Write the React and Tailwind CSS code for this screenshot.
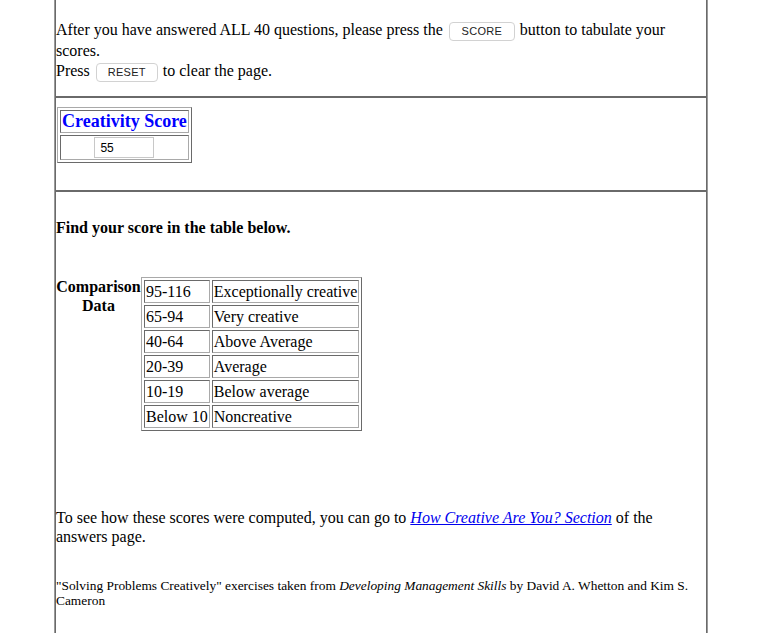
import { useState } from 'react';

// Data tabel perbandingan skor
const ranges = [
  ['95-116', 'Exceptionally creative'],
  ['65-94', 'Very creative'],
  ['40-64', 'Above Average'],
  ['20-39', 'Average'],
  ['10-19', 'Below average'],
  ['Below 10', 'Noncreative'],
];

const tableBorder = 'border border-t-[#a9a9a9] border-l-[#a9a9a9] border-b-[#6a6a6a] border-r-[#6a6a6a]';
const cellBorder = 'border border-t-[#6a6a6a] border-l-[#6a6a6a] border-b-[#a9a9a9] border-r-[#a9a9a9]';

function FormButton({ label, width }) {
  return (
    <button
      className={`inline-block align-middle ml-[2px] mr-[1px] h-[19px] ${width} bg-white border border-[#d2d2d2] rounded-[4px] text-[11px] leading-[17px] font-['Liberation_Sans',sans-serif] text-[#222] tracking-[0.3px]`}
    >
      {label}
    </button>
  );
}

export default function App() {
  const [score, setScore] = useState('55');

  return (
    <div className="min-h-[633px] bg-white font-['Liberation_Serif',serif] text-black text-[16px]">
      <div className="ml-[54px] w-[654px] border-x border-[#9a9a9a]">
        {/* Bagian 1: petunjuk */}
        <div className="border-x border-b border-[#6a6a6a] h-[97px] pt-[20px] leading-[20px]">
          <div>
            After you have answered ALL 40 questions, please press the <FormButton label="SCORE" width="w-[66px]" /> button to tabulate your scores.
          </div>
          <div>
            Press <FormButton label="RESET" width="w-[62px]" /> to clear the page.
          </div>
        </div>

        {/* Bagian 2: skor */}
        <div className="border border-[#6a6a6a] h-[94px] pt-[9px] pl-[1px]">
          <table className={`border-separate border-spacing-[2px] ${tableBorder}`}>
            <tbody>
              <tr>
                <td className={`${cellBorder} p-[1px] text-[18px] leading-[19px] font-bold text-[#0000ff] text-center`}>
                  Creativity Score
                </td>
              </tr>
              <tr>
                <td className={`${cellBorder} p-[1px]`}>
                  <input
                    value={score}
                    onChange={(e) => setScore(e.target.value)}
                    className="block mx-auto w-[60px] h-[21px] border border-[#c8c8c8] px-[5px] text-[12px] font-['Liberation_Sans',sans-serif] text-black outline-none"
                  />
                </td>
              </tr>
            </tbody>
          </table>
        </div>

        {/* Bagian 3: tabel perbandingan */}
        <div className="border-x border-t border-[#6a6a6a] h-[460px] pt-[27px]">
          <div className="font-bold leading-[18px]">Find your score in the table below.</div>

          <div className="flex items-start mt-[40px]">
            <div className="w-[85px] text-center font-bold leading-[19px]">
              Comparison
              <br />
              Data
            </div>
            <table className={`border-separate border-spacing-[2px] ${tableBorder}`}>
              <tbody>
                {ranges.map(([range, label]) => (
                  <tr key={range}>
                    <td className={`${cellBorder} p-[1px] leading-[19px] whitespace-nowrap`}>{range}</td>
                    <td className={`${cellBorder} p-[1px] leading-[19px] whitespace-nowrap`}>{label}</td>
                  </tr>
                ))}
              </tbody>
            </table>
          </div>

          <div className="mt-[77px] leading-[19px]">
            To see how these scores were computed, you can go to{' '}
            <a href="#" className="italic text-[#0000ee] underline">How Creative Are You? Section</a> of the answers page.
          </div>

          <div className="mt-[32px] text-[13.4px] leading-[15px]">
            "Solving Problems Creatively" exercises taken from <i>Developing Management Skills</i> by David A. Whetton and Kim S. Cameron
          </div>
        </div>
      </div>
    </div>
  );
}
